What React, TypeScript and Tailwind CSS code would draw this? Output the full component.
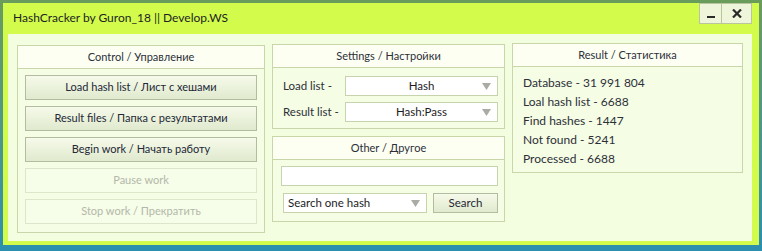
import React from "react";

const font = { fontFamily: 'Lato, Roboto, "Noto Sans", sans-serif' };

function GroupBox({
  title,
  className,
  children,
}: React.PropsWithChildren<{ title: string; className?: string }>) {
  return (
    <div className={"flex flex-col border border-[#c9d6a9] bg-[#f5fde4] " + (className ?? "")}>
      <div className="flex h-[23px] items-center justify-center border-b border-[#c9d6a9] bg-[#fdfff3] text-[11px] text-[#2d2f3a]">
        {title}
      </div>
      {children}
    </div>
  );
}

function WinButton({ label, disabled }: { label: string; disabled?: boolean }) {
  const cls = disabled
    ? "border-[#dde6cb] bg-[#f6fde8] text-[#b3b8aa]"
    : "border-[#b3bba1] bg-gradient-to-b from-[#f6faea] to-[#e0eace] text-[#242737]";
  return (
    <div className={"flex h-[25px] items-center justify-center border text-[11px] " + cls}>
      {label}
    </div>
  );
}

function Select({ value, className, left }: { value: string; className?: string; left?: boolean }) {
  return (
    <div
      className={
        "relative flex h-[20px] items-center border border-[#c7d3ad] bg-white text-[11.5px] text-[#1c1c24] " +
        (left ? "justify-start pl-[4px] " : "justify-center ") +
        (className ?? "")
      }
    >
      {value}
      <svg className="absolute right-[6px] top-[6px]" width="9" height="7" viewBox="0 0 9 7">
        <path d="M0 0 H9 L4.5 7 Z" fill="#a9aca4" />
      </svg>
    </div>
  );
}

export default function App() {
  const stats = [
    "Database - 31 991 804",
    "Loal hash list - 6688",
    "Find hashes - 1447",
    "Not found - 5241",
    "Processed - 6688",
  ];
  return (
    <div
      className="h-[251px] w-[762px] overflow-hidden bg-gradient-to-b from-[#6a9c5a] to-[#2b8fb0] pl-[3px] pt-[3px]"
      style={font}
    >
      <div className="flex h-[242px] w-[756px] flex-col bg-[#d3fb4b]">
        <div className="flex h-[31px] items-start">
          <div className="pl-[10px] pt-[6px] text-[12px] text-[#1d1f24]">
            HashCracker by Guron_18 || Develop.WS
          </div>
          <div className="ml-auto mr-[7px] flex">
            <div className="flex h-[21px] w-[23px] items-end justify-center border border-[#b9c59c] bg-[#eef5da] pb-[5px]">
              <div className="h-[2px] w-[8px] bg-[#2a2a2a]" />
            </div>
            <div className="flex h-[21px] w-[30px] items-center justify-center border border-l-0 border-[#b9c59c] bg-[#eef5da]">
              <svg width="10" height="9" viewBox="0 0 10 9">
                <path d="M1 0.5 L9 8.5 M9 0.5 L1 8.5" stroke="#2a2a2a" strokeWidth="2.2" />
              </svg>
            </div>
          </div>
        </div>
        <div className="ml-[5px] flex h-[207px] w-[744px] gap-[7px] bg-[#f3fde0] pl-[9px]">
          <GroupBox title="Control / Управление" className="mt-[11px] h-[188px] w-[248px]">
            <div className="flex flex-col gap-[6px] px-[7px] pt-[6px]">
              <WinButton label="Load hash list / Лист с хешами" />
              <WinButton label="Result files / Папка с результатами" />
              <WinButton label="Begin work / Начать работу" />
              <WinButton label="Pause work" disabled />
              <WinButton label="Stop work / Прекратить" disabled />
            </div>
          </GroupBox>
          <div className="mt-[10px] flex w-[233px] flex-col gap-[7px]">
            <GroupBox title="Settings / Настройки" className="h-[85px]">
              <div className="flex flex-col gap-[6px] pl-[10px] pr-[6px] pt-[8px] text-[11.5px] text-[#2d2f3a]">
                <div className="flex items-center">
                  <span className="w-[62px]">Load list -</span>
                  <Select value="Hash" className="w-[153px]" />
                </div>
                <div className="flex items-center">
                  <span className="w-[62px]">Result list -</span>
                  <Select value="Hash:Pass" className="w-[153px]" />
                </div>
              </div>
            </GroupBox>
            <GroupBox title="Other / Другое" className="h-[86px]">
              <div className="flex flex-col gap-[7px] pl-[8px] pr-[6px] pt-[6px]">
                <div className="h-[20px] w-[217px] border border-[#c7d3ad] bg-white" />
                <div className="flex gap-[6px] pl-[2px]">
                  <Select value="Search one hash" className="w-[144px]" left />
                  <div className="flex h-[20px] w-[65px] items-center justify-center border border-[#b3bba1] bg-gradient-to-b from-[#f6faea] to-[#e0eace] text-[11.5px] text-[#242737]">
                    Search
                  </div>
                </div>
              </div>
            </GroupBox>
          </div>
          <GroupBox title="Result / Статистика" className="mt-[9px] h-[130px] w-[231px]">
            <div className="flex flex-col pl-[10px] pt-[6px] text-[12px] text-[#2d2f3a]">
              {stats.map((s) => (
                <div key={s} className="flex h-[19px] items-center">
                  {s}
                </div>
              ))}
            </div>
          </GroupBox>
        </div>
      </div>
    </div>
  );
}
